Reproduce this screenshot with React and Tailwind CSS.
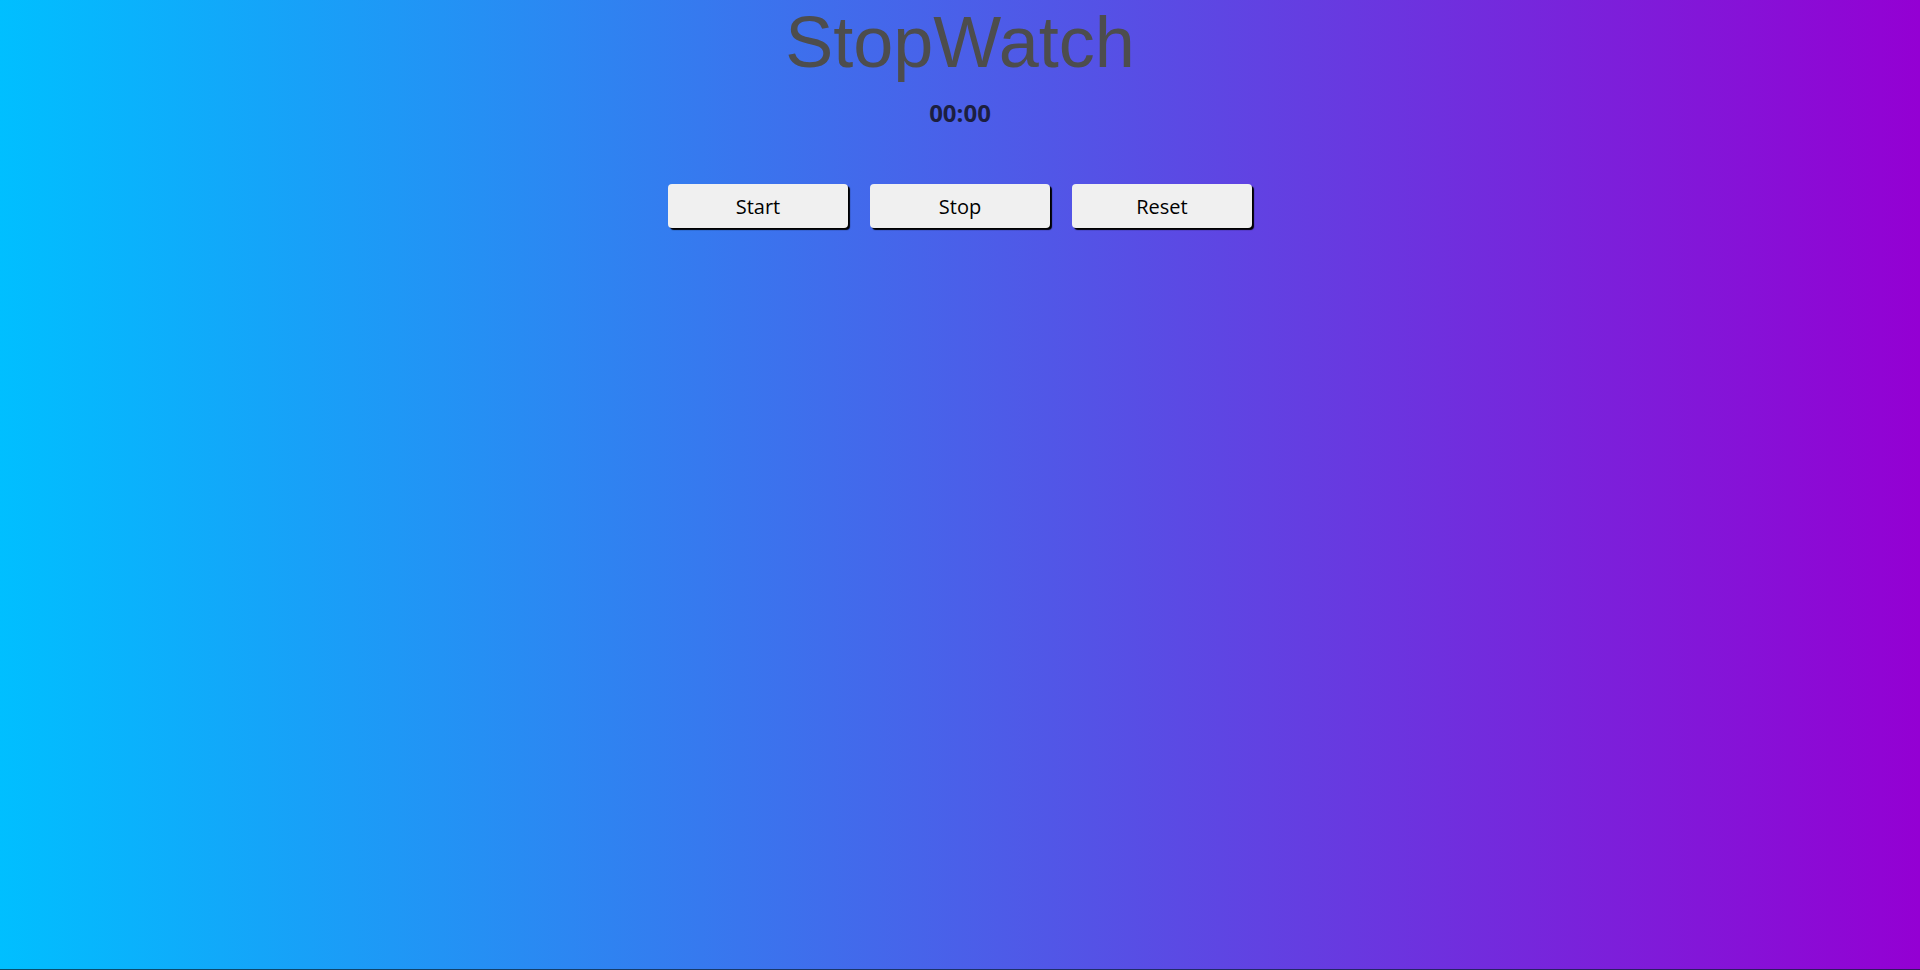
export default function App() {
  return (
    <div className="w-full h-[970px] flex flex-col bg-[linear-gradient(to_right,#00bfff,#9400d3)] overflow-hidden">
      <div className="flex-1 flex flex-col items-center">
        <h1 className="pt-[2px] text-[72px] leading-[80px] font-normal text-[#4d4d4d] font-['Liberation_Sans',Arial,sans-serif]">
          StopWatch
        </h1>
        <div className="mt-[15px] text-[24px] leading-[32px] font-bold text-[#1c1f40] font-['Open_Sans',sans-serif]">
          00:00
        </div>
        <div className="mt-[55px] flex gap-[22px]">
          {["Start", "Stop", "Reset"].map((t) => (
            <button
              key={t}
              className="w-[180px] h-[44px] pt-[2px] rounded-[4px] bg-[#f0f0f0] text-black text-[20px] font-['Open_Sans',sans-serif] shadow-[2px_2px_1px_#000]"
            >
              {t}
            </button>
          ))}
        </div>
      </div>
      <div className="h-px bg-[#0b2030]/70"></div>
    </div>
  );
}
